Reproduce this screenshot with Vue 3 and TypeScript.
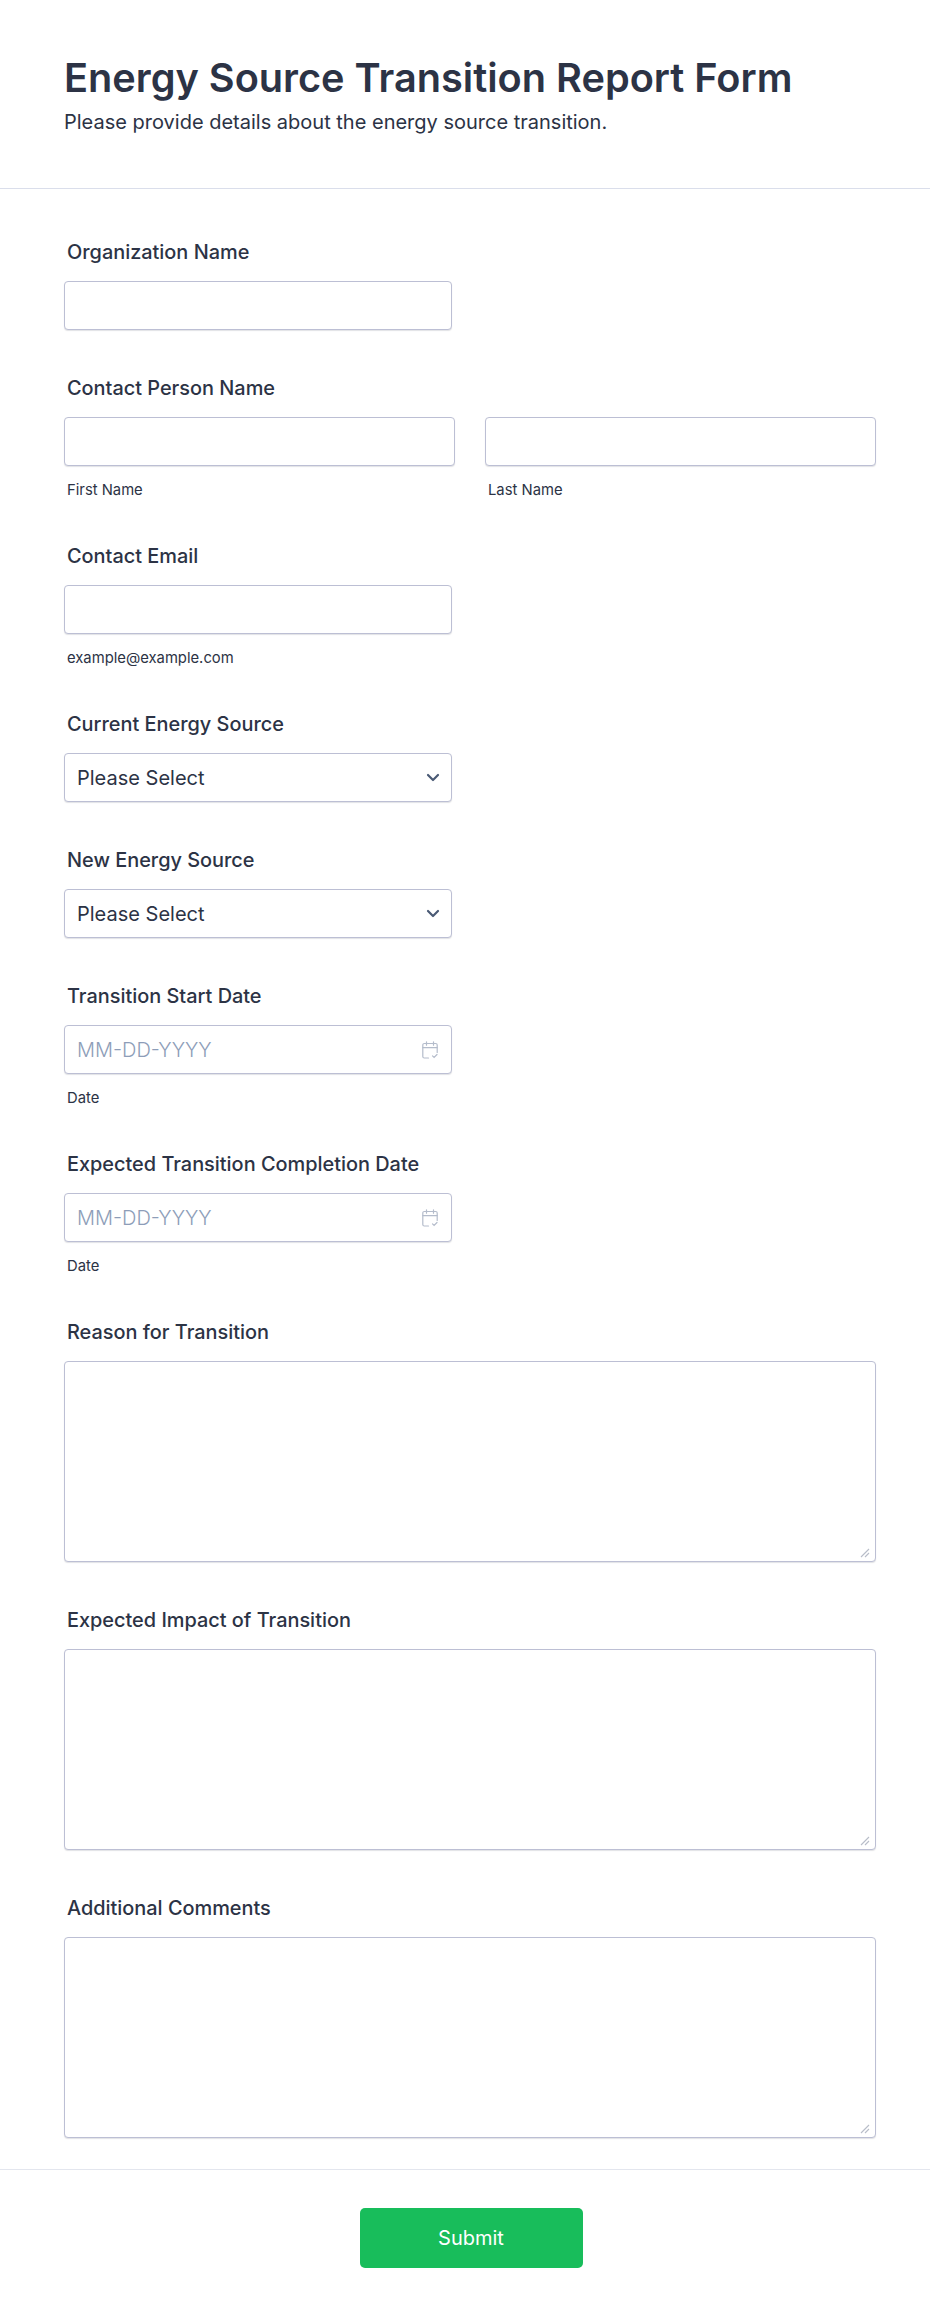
<script setup lang="ts">
const selects = [
  { id: 'current', label: 'Current Energy Source' },
  { id: 'next', label: 'New Energy Source' },
]
const dates = [
  { id: 'start', label: 'Transition Start Date' },
  { id: 'end', label: 'Expected Transition Completion Date' },
]
const areas = [
  { id: 'reason', label: 'Reason for Transition' },
  { id: 'impact', label: 'Expected Impact of Transition' },
  { id: 'comments', label: 'Additional Comments' },
]
</script>

<template>
  <main class="page">
    <header class="head">
      <h1>Energy Source Transition Report Form</h1>
      <p>Please provide details about the energy source transition.</p>
    </header>

    <form class="body" @submit.prevent>
      <div class="field">
        <label for="org">Organization Name</label>
        <input id="org" class="control short" type="text" />
      </div>

      <div class="field">
        <label>Contact Person Name</label>
        <div class="pair">
          <div class="col">
            <input class="control" type="text" aria-label="First Name" />
            <span class="sub">First Name</span>
          </div>
          <div class="col">
            <input class="control" type="text" aria-label="Last Name" />
            <span class="sub">Last Name</span>
          </div>
        </div>
      </div>

      <div class="field">
        <label for="email">Contact Email</label>
        <input id="email" class="control short" type="email" />
        <span class="sub">example@example.com</span>
      </div>

      <div v-for="s in selects" :key="s.id" class="field">
        <label :for="s.id">{{ s.label }}</label>
        <div class="wrap short">
          <select :id="s.id" class="control select">
            <option>Please Select</option>
          </select>
          <svg class="chev" width="14" height="9" viewBox="0 0 14 9" aria-hidden="true">
            <path d="M2 2l5 5 5-5" fill="none" stroke="#4a5a75" stroke-width="2.2" stroke-linecap="round" stroke-linejoin="round" />
          </svg>
        </div>
      </div>

      <div v-for="d in dates" :key="d.id" class="field">
        <label :for="d.id">{{ d.label }}</label>
        <div class="wrap short">
          <input :id="d.id" class="control date" type="text" placeholder="MM-DD-YYYY" />
          <svg class="cal" width="16" height="18" viewBox="0 0 16 18" fill="none" stroke="#b4bccb" stroke-width="1.2" stroke-linecap="round" aria-hidden="true">
            <path d="M4.5 .8v3.4M11.5 .8v3.4M.8 6.6h14.4" />
            <path d="M6.5 17H2.3A1.5 1.5 0 0 1 .8 15.5V4A1.5 1.5 0 0 1 2.3 2.5h11.4A1.5 1.5 0 0 1 15.2 4v7.5" />
            <path d="M10.5 14.8l1.6 1.6 2.9-2.9" />
          </svg>
        </div>
        <span class="sub">Date</span>
      </div>

      <div v-for="a in areas" :key="a.id" class="field">
        <label :for="a.id">{{ a.label }}</label>
        <div class="wrap full">
          <textarea :id="a.id" class="control area"></textarea>
          <svg class="grip" width="10" height="10" viewBox="0 0 10 10" fill="none" stroke="#b8bdc9" stroke-width="1.1" aria-hidden="true">
            <path d="M9 1L1 9M9 5L5 9" />
          </svg>
        </div>
      </div>
    </form>

    <footer class="foot">
      <button class="submit" type="submit">Submit</button>
    </footer>
  </main>
</template>

<style scoped>
.page {
  width: 930px;
  min-height: 2316px;
  background: #fff;
  color: #2c3345;
  font-family: Inter, "Noto Sans", sans-serif;
}
.head {
  height: 189px;
  box-sizing: border-box;
  padding: 54px 64px 0;
  border-bottom: 1px solid #dadeeb;
}
h1 {
  margin: 0;
  font-size: 39.7px;
  line-height: 48px;
  font-weight: 600;
  color: #2c3345;
}
.head p {
  margin: 5px 0 0;
  font-size: 20px;
  line-height: 30px;
  font-weight: 400;
  color: #2c3345;
}
.body {
  padding: 48px 54px 0 64px;
}
.field {
  display: flex;
  flex-direction: column;
  align-items: flex-start;
  margin-bottom: 43px;
}
.field:last-child {
  margin-bottom: 31px;
}
label {
  font-size: 19.9px;
  line-height: 28px;
  font-weight: 450;
  color: #2c3345;
  margin: 1px 0 15px 3px;
}
.control {
  display: block;
  box-sizing: border-box;
  width: 100%;
  height: 49px;
  margin: 0;
  padding: 0 12px;
  background: #fff;
  border: 1px solid #bcbfd4;
  border-radius: 4px;
  box-shadow: 0 1px 1px rgba(44, 51, 69, 0.14);
  font: 400 20px Inter, "Noto Sans", sans-serif;
  color: #2c3345;
  outline: none;
}
.short {
  width: 388px;
}
.full {
  width: 100%;
}
.pair {
  display: flex;
  gap: 30px;
  width: 100%;
}
.col {
  flex: 1;
  min-width: 0;
}
.sub {
  display: block;
  font-size: 14.8px;
  line-height: 20px;
  margin: 14px 0 -2px 3px;
  color: #2c3345;
}
.wrap {
  position: relative;
}
.select {
  appearance: none;
  padding-right: 36px;
}
.chev {
  position: absolute;
  right: 12px;
  top: 20px;
  pointer-events: none;
}
.date::placeholder {
  color: #8d9db8;
  opacity: 1;
  font-weight: 300;
}
.cal {
  position: absolute;
  right: 14px;
  top: 16px;
  pointer-events: none;
}
.area {
  height: 201px;
  padding: 12px;
  resize: none;
}
.grip {
  position: absolute;
  right: 6px;
  bottom: 4px;
  pointer-events: none;
}
.foot {
  height: 147px;
  box-sizing: border-box;
  border-top: 1px solid #e3e6ee;
  padding: 38px 0 0 12px;
  display: flex;
  justify-content: center;
  align-items: flex-start;
}
.submit {
  width: 223px;
  height: 60px;
  border: 0;
  border-radius: 5px;
  background: #18bd5b;
  color: #fff;
  font: 400 20px Inter, "Noto Sans", sans-serif;
  cursor: pointer;
}
</style>

<style>
html, body { margin: 0; background: #fff; }
</style>
